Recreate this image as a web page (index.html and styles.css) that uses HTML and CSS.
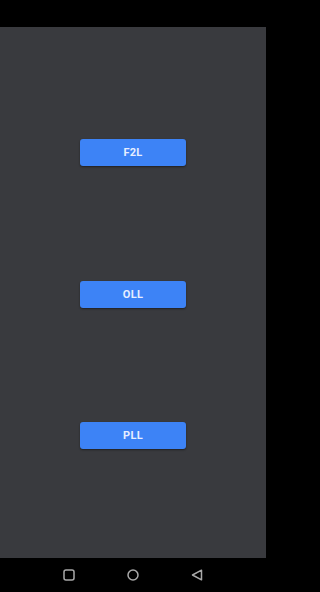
FILE: index.html
```
<!DOCTYPE html>
<html>
<head>
<meta charset="utf-8">
<link rel="stylesheet" href="styles.css">
</head>
<body>
<div class="screen">
  <div class="status"></div>
  <main class="content">
    <button class="btn">F2L</button>
    <button class="btn">OLL</button>
    <button class="btn">PLL</button>
  </main>
  <nav class="navbar">
    <svg class="nav-icon" viewBox="0 0 12 12"><rect x="1" y="1" width="10" height="10" rx="2" fill="none" stroke="#a9a9a9" stroke-width="1.5"/></svg>
    <svg class="nav-icon" viewBox="0 0 12 12"><circle cx="6" cy="6" r="5" fill="none" stroke="#a9a9a9" stroke-width="1.5"/></svg>
    <svg class="nav-icon" viewBox="0 0 12 12"><path d="M10.5 1.2 L1.5 6 L10.5 10.8 Z" fill="none" stroke="#a9a9a9" stroke-width="1.5" stroke-linejoin="round"/></svg>
  </nav>
</div>
</body>
</html>
```
FILE: styles.css
```
html, body {
  margin: 0;
  padding: 0;
  background: #000;
}
.screen {
  width: 266px;
  height: 592px;
  display: flex;
  flex-direction: column;
  font-family: Roboto, "Liberation Sans", sans-serif;
}
.status {
  height: 27px;
  background: #000;
  flex: none;
}
.content {
  flex: 1;
  background: #393a3e;
  display: flex;
  flex-direction: column;
  align-items: center;
  justify-content: flex-start;
  padding-top: 112px;
  gap: 114.5px;
}
.btn {
  width: 106px;
  height: 27px;
  flex: none;
  border: none;
  border-radius: 3px;
  background: #3d83f6;
  color: #e6eeff;
  font-family: Roboto, "Liberation Sans", sans-serif;
  font-weight: 700;
  font-size: 11px;
  letter-spacing: 0.3px;
  box-shadow: 0 1px 2px rgba(0,0,0,0.45);
  padding: 0;
}
.navbar {
  height: 33px;
  flex: none;
  background: #000;
  display: flex;
  align-items: center;
  justify-content: center;
  gap: 52px;
  padding-bottom: 1px;
}
.nav-icon {
  width: 12px;
  height: 12px;
}
```
